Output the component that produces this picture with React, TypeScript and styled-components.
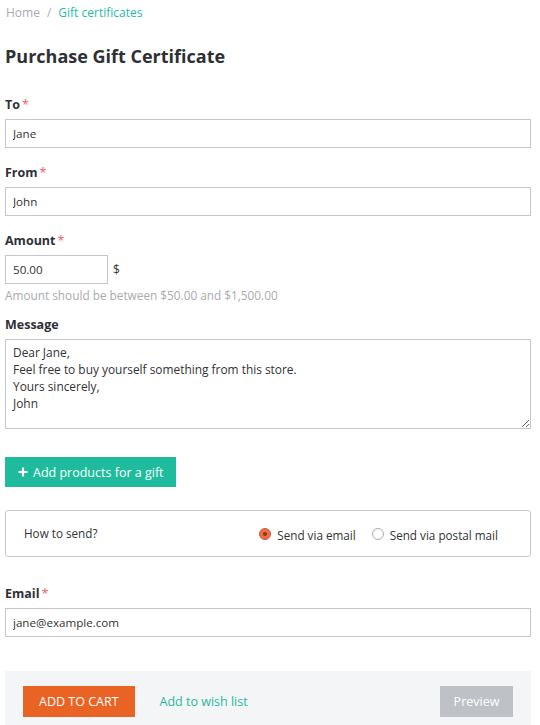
import React from "react";
import styled, { createGlobalStyle } from "styled-components";

const Global = createGlobalStyle`
  html, body { margin: 0; padding: 0; background: #fff; }
  body { font-family: "Open Sans", "Liberation Sans", sans-serif; color: #333; }
  * { box-sizing: border-box; }
`;

const Page = styled.div`
  padding: 0 9px 0 5px;
  width: 540px;
`;

const Breadcrumbs = styled.nav`
  display: flex;
  align-items: center;
  gap: 7px;
  font-size: 12px;
  line-height: 18px;
  padding: 4px 0 0 1px;
  color: #a7abb1;
`;

const Crumb = styled.span<{ $active?: boolean }>`
  color: ${(p) => (p.$active ? "#1ebc9f" : "#a7abb1")};
`;

const Title = styled.h1`
  font-size: 18px;
  font-weight: 700;
  line-height: 26px;
  margin: 21px 0 0;
  color: #2e3035;
`;

const Field = styled.div<{ $top?: number }>`
  margin-top: ${(p) => p.$top ?? 16}px;
  display: flex;
  flex-direction: column;
`;

const Label = styled.label`
  font-size: 12.5px;
  font-weight: 700;
  line-height: 18px;
  color: #2e3035;
  margin-bottom: 5px;
  display: flex;
  gap: 2px;
`;

const Star = styled.span`
  color: #f06060;
  font-weight: 400;
`;

const Input = styled.input<{ $width?: number }>`
  width: ${(p) => (p.$width ? `${p.$width}px` : "100%")};
  height: 29px;
  border: 1px solid #c4c7cc;
  padding: 0 7px;
  font-family: inherit;
  font-size: 11.6px;
  color: #333;
  outline: none;
  background: #fff;
`;

const Row = styled.div`
  display: flex;
  align-items: center;
  gap: 5px;
  font-size: 12px;
`;

const Help = styled.div`
  font-size: 11.8px;
  color: #a9abae;
  line-height: 16px;
  margin-top: 3px;
`;

const TextArea = styled.textarea`
  width: 100%;
  height: 90px;
  border: 1px solid #c4c7cc;
  padding: 4px 7px;
  font-family: inherit;
  font-size: 11.9px;
  line-height: 17px;
  color: #333;
  outline: none;
  resize: vertical;
`;

const GreenButton = styled.button`
  align-self: flex-start;
  margin-top: 28px;
  height: 30px;
  padding: 0 12px 0 13px;
  display: flex;
  align-items: center;
  gap: 5px;
  background: #1ebc9c;
  color: #fff;
  border: none;
  font-family: inherit;
  font-size: 12.5px;
`;

const SendBox = styled.div`
  margin-top: 23px;
  height: 47px;
  border: 1px solid #c4c7cc;
  border-radius: 3px;
  display: flex;
  align-items: center;
  padding: 0 32px 0 18px;
  font-size: 11.7px;
`;

const SendLabel = styled.div`
  flex: 1;
  margin-top: -2px;
`;

const RadioGroup = styled.div`
  display: flex;
  align-items: center;
  gap: 16px;
  margin-top: 2px;
`;

const RadioOption = styled.label`
  display: flex;
  align-items: center;
  gap: 6px;
`;

const RadioDot = styled.span<{ $checked?: boolean }>`
  width: 12px;
  height: 12px;
  border-radius: 50%;
  border: 1px solid ${(p) => (p.$checked ? "#c75a31" : "#a9acb0")};
  background: ${(p) => (p.$checked ? "#ee6e43" : "#fff")};
  display: flex;
  align-items: center;
  justify-content: center;
  margin-top: -1px;
  &::after {
    content: "";
    width: 4px;
    height: 4px;
    border-radius: 50%;
    background: ${(p) => (p.$checked ? "#8c3416" : "transparent")};
  }
`;

const Panel = styled.div`
  margin-top: 34px;
  background: #f4f5f7;
  padding: 15px 18px 20px;
  display: flex;
  align-items: center;
`;

const OrangeButton = styled.button`
  height: 31px;
  padding: 0 16px;
  background: #e96424;
  color: #fff;
  border: none;
  font-family: inherit;
  font-size: 12.5px;
`;

const WishLink = styled.a`
  margin-left: 25px;
  color: #1ebc9c;
  font-size: 12.5px;
  flex: 1;
  text-decoration: none;
`;

const GrayButton = styled.button`
  height: 31px;
  width: 73px;
  background: #bec2c6;
  color: #fff;
  border: none;
  font-family: inherit;
  font-size: 12.5px;
`;

export default function App() {
  return (
    <Page>
      <Global />
      <Breadcrumbs>
        <Crumb>Home</Crumb>
        <Crumb>/</Crumb>
        <Crumb $active>Gift certificates</Crumb>
      </Breadcrumbs>
      <Title>Purchase Gift Certificate</Title>

      <Field $top={27}>
        <Label>To<Star>*</Star></Label>
        <Input defaultValue="Jane" />
      </Field>
      <Field>
        <Label>From<Star>*</Star></Label>
        <Input defaultValue="John" />
      </Field>
      <Field $top={16}>
        <Label>Amount<Star>*</Star></Label>
        <Row>
          <Input $width={103} defaultValue="50.00" />
          <span>$</span>
        </Row>
        <Help>Amount should be between $50.00 and $1,500.00</Help>
      </Field>
      <Field $top={13}>
        <Label>Message</Label>
        <TextArea
          defaultValue={"Dear Jane,\nFeel free to buy yourself something from this store.\nYours sincerely,\nJohn"}
        />
      </Field>
      <GreenButton>
        <svg width="10" height="10" viewBox="0 0 10 10">
          <path d="M5 0.5v9M0.5 5h9" stroke="#fff" strokeWidth="2.2" />
        </svg>
        Add products for a gift
      </GreenButton>
      <SendBox>
        <SendLabel>How to send?</SendLabel>
        <RadioGroup>
          <RadioOption>
            <RadioDot $checked />
            Send via email
          </RadioOption>
          <RadioOption>
            <RadioDot />
            Send via postal mail
          </RadioOption>
        </RadioGroup>
      </SendBox>
      <Field $top={28}>
        <Label>Email<Star>*</Star></Label>
        <Input defaultValue="jane@example.com" />
      </Field>
      <Panel>
        <OrangeButton>ADD TO CART</OrangeButton>
        <WishLink href="#">Add to wish list</WishLink>
        <GrayButton>Preview</GrayButton>
      </Panel>
    </Page>
  );
}
